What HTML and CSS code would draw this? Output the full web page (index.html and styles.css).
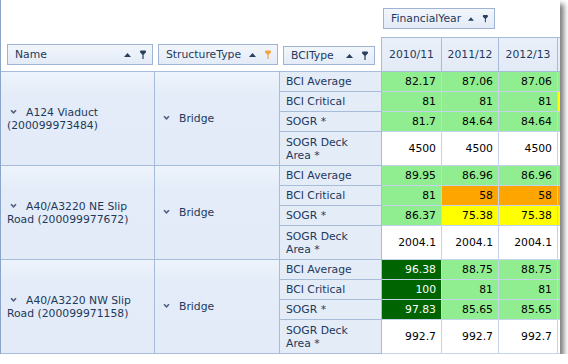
FILE: index.html
```html
<!DOCTYPE html>
<html>
<head>
<meta charset="utf-8">
<link rel="stylesheet" href="styles.css">
</head>
<body>
<div class="window">
  <div class="header">
    <div class="row-fields">
      <div class="field f-name"><span class="label">Name</span><svg class="sort" width="7" height="4" viewBox="0 0 7 4"><path d="M0 4L3.5 0L7 4z"/></svg><svg class="filter" width="7" height="9" viewBox="0 0 7 9"><path d="M1 0.5h5a1 1 0 0 1 1 1v0.8l-2.4 2.4v4.3h-1.2v-4.3l-2.4-2.4v-0.8a1 1 0 0 1 1-1z"/></svg></div>
      <div class="field f-struct"><span class="label">StructureType</span><svg class="sort" width="7" height="4" viewBox="0 0 7 4"><path d="M0 4L3.5 0L7 4z"/></svg><svg class="filter active" width="7" height="9" viewBox="0 0 7 9"><path d="M1 0.5h5a1 1 0 0 1 1 1v0.8l-2.4 2.4v4.3h-1.2v-4.3l-2.4-2.4v-0.8a1 1 0 0 1 1-1z"/></svg></div>
      <div class="field f-type"><span class="label">BCIType</span><svg class="sort" width="7" height="4" viewBox="0 0 7 4"><path d="M0 4L3.5 0L7 4z"/></svg><svg class="filter" width="7" height="9" viewBox="0 0 7 9"><path d="M1 0.5h5a1 1 0 0 1 1 1v0.8l-2.4 2.4v4.3h-1.2v-4.3l-2.4-2.4v-0.8a1 1 0 0 1 1-1z"/></svg></div>
    </div>
    <div class="col-side">
      <div class="field f-fy"><span class="label">FinancialYear</span><svg class="sort" width="7" height="4" viewBox="0 0 7 4"><path d="M0 4L3.5 0L7 4z"/></svg><svg class="filter" width="7" height="9" viewBox="0 0 7 9"><path d="M1 0.5h5a1 1 0 0 1 1 1v0.8l-2.4 2.4v4.3h-1.2v-4.3l-2.4-2.4v-0.8a1 1 0 0 1 1-1z"/></svg></div>
      <div class="col-heads">
        <div class="ch ch1">2010/11</div>
        <div class="ch ch2">2011/12</div>
        <div class="ch ch3">2012/13</div>
        <div class="ch ch4"></div>
      </div>
    </div>
  </div>

  <div class="group">
    <div class="gh g-name"><span><svg class="chev" width="14" height="6" viewBox="0 0 14 6"><path d="M4 1.3l2.5 2.6l2.5-2.6"/></svg>A124 Viaduct (200099973484)</span></div>
    <div class="gh g-struct"><span><svg class="chev" width="14" height="6" viewBox="0 0 14 6"><path d="M4 1.3l2.5 2.6l2.5-2.6"/></svg>Bridge</span></div>
    <div class="t">BCI Average</div><div class="d lg">82.17</div><div class="d lg">87.06</div><div class="d lg">87.06</div><div class="d lg e"></div>
    <div class="t">BCI Critical</div><div class="d lg">81</div><div class="d lg">81</div><div class="d lg">81</div><div class="d ye e"></div>
    <div class="t">SOGR *</div><div class="d lg">81.7</div><div class="d lg">84.64</div><div class="d lg">84.64</div><div class="d lg e"></div>
    <div class="t">SOGR Deck Area *</div><div class="d">4500</div><div class="d">4500</div><div class="d">4500</div><div class="d e"></div>
  </div>

  <div class="group">
    <div class="gh g-name"><span><svg class="chev" width="14" height="6" viewBox="0 0 14 6"><path d="M4 1.3l2.5 2.6l2.5-2.6"/></svg>A40/A3220 NE Slip Road (200099977672)</span></div>
    <div class="gh g-struct"><span><svg class="chev" width="14" height="6" viewBox="0 0 14 6"><path d="M4 1.3l2.5 2.6l2.5-2.6"/></svg>Bridge</span></div>
    <div class="t">BCI Average</div><div class="d lg">89.95</div><div class="d lg">86.96</div><div class="d lg">86.96</div><div class="d lg e"></div>
    <div class="t">BCI Critical</div><div class="d lg">81</div><div class="d or">58</div><div class="d or">58</div><div class="d or e"></div>
    <div class="t">SOGR *</div><div class="d lg">86.37</div><div class="d ye">75.38</div><div class="d ye">75.38</div><div class="d ye e"></div>
    <div class="t">SOGR Deck Area *</div><div class="d">2004.1</div><div class="d">2004.1</div><div class="d">2004.1</div><div class="d e"></div>
  </div>

  <div class="group">
    <div class="gh g-name"><span><svg class="chev" width="14" height="6" viewBox="0 0 14 6"><path d="M4 1.3l2.5 2.6l2.5-2.6"/></svg>A40/A3220 NW Slip Road (200099971158)</span></div>
    <div class="gh g-struct"><span><svg class="chev" width="14" height="6" viewBox="0 0 14 6"><path d="M4 1.3l2.5 2.6l2.5-2.6"/></svg>Bridge</span></div>
    <div class="t">BCI Average</div><div class="d dg">96.38</div><div class="d lg">88.75</div><div class="d lg">88.75</div><div class="d lg e"></div>
    <div class="t">BCI Critical</div><div class="d dg">100</div><div class="d lg">81</div><div class="d lg">81</div><div class="d lg e"></div>
    <div class="t">SOGR *</div><div class="d dg">97.83</div><div class="d lg">85.65</div><div class="d lg">85.65</div><div class="d lg e"></div>
    <div class="t">SOGR Deck Area *</div><div class="d">992.7</div><div class="d">992.7</div><div class="d">992.7</div><div class="d e"></div>
  </div>
</div>
</body>
</html>
```

FILE: styles.css
```css
* { box-sizing: border-box; }

html, body {
  margin: 0;
  padding: 0;
  background: #ffffff;
}

body {
  font-family: "DejaVu Sans", Verdana, sans-serif;
  font-size: 10.8px;
  line-height: 13px;
  color: #1e395b;
}

.window {
  width: 560px;
  height: 354px;
  border-left: 1px solid #8aa5c9;
  background: #ffffff;
  overflow: hidden;
  box-shadow: 4px 4px 5px rgba(0, 0, 0, 0.5);
}

/* ---------- header ---------- */
.header {
  display: flex;
  height: 72px;
  border-bottom: 1px solid #a6bcd9;
}

.row-fields {
  width: 380px;
  display: flex;
  align-items: flex-end;
  gap: 5px;
  padding: 0 0 6px 6px;
}

.col-side {
  width: 179px;
  display: flex;
  flex-direction: column;
  padding-top: 8px;
}

.field {
  height: 21px;
  display: flex;
  align-items: center;
  border: 1px solid #9eb4d2;
  background: linear-gradient(#f2f6fc, #e3ebf7);
  padding: 0 6px 0 7px;
  white-space: nowrap;
}

.field .label { flex: 1; }

.field .sort { fill: #2a3f5e; margin-left: 7px; }
.field .filter { fill: #2a3f5e; margin-left: 8px; }
.field .filter.active { fill: #f2a43a; }

.f-name { width: 146px; }
.f-struct { width: 120px; }
.f-type { width: 92px; height: 19px; }
.f-fy { width: 112px; margin-left: 2px; margin-bottom: 8px; }

.col-heads {
  display: flex;
  height: 34px;
}

.ch {
  border-top: 1px solid #a6bcd9;
  border-right: 1px solid #a6bcd9;
  background: linear-gradient(#eaf0f9, #e2eaf6);
  display: flex;
  align-items: center;
  justify-content: center;
}

.ch1 { width: 61px; border-left: 1px solid #a6bcd9; }
.ch2 { width: 57px; }
.ch3 { width: 59px; }
.ch4 { width: 2px; border-right: none; }

/* ---------- groups ---------- */
.group {
  display: grid;
  grid-template-columns: 154px 125px 102px 60px 57px 59px 2px;
  grid-template-rows: 20px 20px 20px 34px;
}

.gh {
  grid-row: 1 / 5;
  border-right: 1px solid #a6bcd9;
  border-bottom: 1px solid #a6bcd9;
  background: linear-gradient(#eef4fc, #e3ecf8 25%, #e2ebf7);
  display: flex;
  align-items: center;
}

.g-name { grid-column: 1; padding: 0 6px 0 6px; }
.g-struct { grid-column: 2; padding: 0 6px 0 5px; }

.chev {
  fill: none;
  stroke: #4e607c;
  stroke-width: 1.6;
  margin-right: 5px;
  vertical-align: 1px;
}

.t {
  grid-column: 3;
  border-right: 1px solid #a6bcd9;
  border-bottom: 1px solid #a6bcd9;
  background: #e4ecf8;
  padding: 0 8px 0 6px;
  display: flex;
  align-items: center;
}

.d {
  border-right: 1px solid #c3d4ec;
  border-bottom: 1px solid #c3d4ec;
  background: #ffffff;
  color: #000000;
  display: flex;
  align-items: center;
  justify-content: flex-end;
  padding-right: 5px;
}

.d.e { border-right: none; padding: 0; }

.lg { background: #90ee90; }
.dg { background: #006400; color: #ffffff; }
.or { background: #ffa500; }
.ye { background: #ffff00; }
```
